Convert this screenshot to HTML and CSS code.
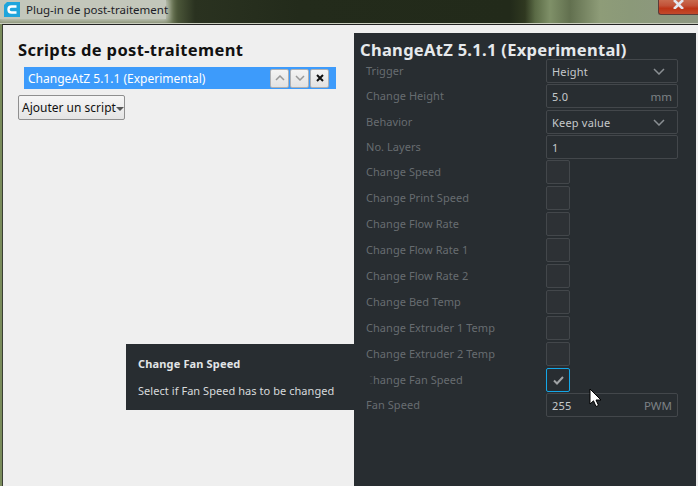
FILE: index.html
```html
<!DOCTYPE html>
<html lang="fr">
<head>
<meta charset="utf-8">
<title>Plug-in de post-traitement</title>
<link rel="stylesheet" href="styles.css">
</head>
<body>
<div class="titlebar">
  <div class="title-glow">
    <svg class="app-icon" width="16" height="15" viewBox="0 0 16 15"><path d="M3 0H16V15H0V3Z" fill="#1fa5dc"/><path d="M12.5 4.5H7.5Q4.5 4.5 4.5 7.5T7.5 10.5H12.5" fill="none" stroke="#fff" stroke-width="2.4"/></svg>
    <span class="title-text">Plug-in de post-traitement</span>
  </div>
  <div class="close-btn"><svg width="11" height="9" viewBox="0 0 11 9"><path d="M1 0L10 9M10 0L1 9" stroke="#e4e6ee" stroke-width="2.6"/></svg></div>
</div>
<div class="window">
  <section class="left">
    <h1 class="scripts-title">Scripts de post-traitement</h1>
    <div class="script-item">
      <span class="script-name">ChangeAtZ 5.1.1 (Experimental)</span>
      <span class="tool-btn"><svg width="10" height="6" viewBox="0 0 10 6"><path d="M1 5L5 1L9 5" fill="none" stroke="#999" stroke-width="1.5"/></svg></span>
      <span class="tool-btn"><svg width="10" height="6" viewBox="0 0 10 6"><path d="M1 1L5 5L9 1" fill="none" stroke="#999" stroke-width="1.5"/></svg></span>
      <span class="tool-btn"><svg width="8" height="8" viewBox="0 0 8 8"><path d="M1 1L7 7M7 1L1 7" stroke="#111" stroke-width="2"/></svg></span>
    </div>
    <div class="add-btn">Ajouter un script<span class="add-arrow"></span></div>
  </section>
  <section class="right">
    <h2 class="panel-title">ChangeAtZ 5.1.1 (Experimental)</h2>
    <div class="row"><span class="label">Trigger</span><div class="field"><span>Height</span><svg class="chev" width="12" height="7" viewBox="0 0 12 7"><path d="M1 1L6 6L11 1" fill="none" stroke="#8a8f93" stroke-width="1.5"/></svg></div></div>
    <div class="row gap2"><span class="label">Change Height</span><div class="field"><span>5.0</span><span class="unit">mm</span></div></div>
    <div class="row"><span class="label">Behavior</span><div class="field"><span>Keep value</span><svg class="chev" width="12" height="7" viewBox="0 0 12 7"><path d="M1 1L6 6L11 1" fill="none" stroke="#8a8f93" stroke-width="1.5"/></svg></div></div>
    <div class="row"><span class="label">No. Layers</span><div class="field"><span>1</span></div></div>
    <div class="row gap2"><span class="label">Change Speed</span><div class="check"></div></div>
    <div class="row gap2"><span class="label">Change Print Speed</span><div class="check"></div></div>
    <div class="row gap2"><span class="label">Change Flow Rate</span><div class="check"></div></div>
    <div class="row gap2"><span class="label">Change Flow Rate 1</span><div class="check"></div></div>
    <div class="row gap2"><span class="label">Change Flow Rate 2</span><div class="check"></div></div>
    <div class="row gap2"><span class="label">Change Bed Temp</span><div class="check"></div></div>
    <div class="row gap2"><span class="label">Change Extruder 1 Temp</span><div class="check"></div></div>
    <div class="row gap2"><span class="label">Change Extruder 2 Temp</span><div class="check"></div></div>
    <div class="row"><span class="label label-cut"><span class="cut-c">C</span>hange Fan Speed</span><div class="check check-on"><svg width="11" height="9" viewBox="0 0 11 9"><path d="M1 4.5L4 7.5L10 1" fill="none" stroke="#a0a3a6" stroke-width="2"/></svg></div></div>
    <div class="row"><span class="label">Fan Speed</span><div class="field"><span>255</span><span class="unit">PWM</span></div></div>
  </section>
  <aside class="tooltip">
    <div class="tip-title">Change Fan Speed</div>
    <div class="tip-body">Select if Fan Speed has to be changed</div>
  </aside>
  <svg class="cursor" width="13" height="20" viewBox="0 0 13 20"><path d="M1 1V16L4.5 12.8L7 18.5L9.5 17.4L7 12H12Z" fill="#fff" stroke="#000" stroke-width="1"/></svg>
</div>
</body>
</html>
```

FILE: styles.css
```css
* { box-sizing: border-box; }
html, body { margin: 0; height: 100%; }
body {
  width: 698px;
  height: 486px;
  overflow: hidden;
  display: flex;
  flex-direction: column;
  font-family: "Noto Sans", sans-serif;
  background: #7a8c5c;
}
.titlebar {
  height: 24px;
  flex: none;
  overflow: hidden;
  display: flex;
  align-items: flex-start;
  justify-content: space-between;
  border-bottom: 1px solid #c9cdbe;
  background: linear-gradient(90deg, #75815c 0, #6f7b58 170px, #4a5538 178px, #2a3220 195px, #232b1b 300px, #222a1a 510px, #2f3820 525px, #5a6a45 535px, #7f9068 550px, #62704f 570px, #8e9c78 600px, #8b9979 630px, #8d9681 698px);
}
.title-glow {
  flex: none;
  width: 166px;
  height: 19px;
  display: flex;
  align-items: flex-start;
  padding: 2px 0 0 4px;
  gap: 6px;
  background: #c3c7bb;
  box-shadow: 0 0 6px 3px #c3c7bb;
}
.app-icon { flex: none; }
.title-text { font-size: 11.5px; line-height: 15px; color: #1c1c26; white-space: nowrap; }
.close-btn {
  flex: none;
  width: 40px;
  height: 15px;
  background: linear-gradient(#c96a4e 0, #c25238 40%, #bd3517 60%, #c24a2c 100%);
  border: 1px solid #5c3a38;
  border-top: 0;
  border-right: 0;
  border-radius: 0 0 0 3px;
  display: flex;
  justify-content: center;
  align-items: flex-start;
}
.window {
  position: relative;
  flex: 1;
  display: flex;
  margin-left: 2px;
  border-left: 1px solid #3a3f35;
  border-top: 1px solid #222;
  background: #efefef;
  padding-right: 2px;
}
.left { width: 351px; flex: none; padding: 15px 0 0 15px; }
.scripts-title {
  margin: 0 0 7px;
  font-size: 16.5px;
  line-height: 20px;
  font-weight: 700;
  color: #111;
  letter-spacing: 0.36px;
  white-space: nowrap;
}
.script-item {
  margin-left: 6px;
  width: 312px;
  height: 22px;
  background: #3d9bfb;
  display: flex;
  align-items: center;
  gap: 1px;
  padding: 0 7px 0 4px;
  margin-bottom: 6px;
}
.script-name { flex: 1; font-size: 12px; color: #fff; white-space: nowrap; }
.tool-btn {
  width: 19px;
  height: 19px;
  background: linear-gradient(#f4f4f4, #e2e2e2);
  border: 1px solid #aeb0b3;
  border-radius: 2px;
  display: flex;
  align-items: center;
  justify-content: center;
}
.add-btn {
  width: 107px;
  height: 25px;
  background: linear-gradient(#f6f6f6, #e4e4e4);
  border: 1px solid #8f8f8f;
  border-radius: 2px;
  display: flex;
  align-items: center;
  padding-left: 3px;
  font-size: 12px;
  color: #111;
  white-space: nowrap;
}
.add-arrow {
  width: 0; height: 0;
  margin-top: 2px;
  border: 4px solid transparent;
  border-top: 4px solid #555;
  border-bottom: 0;
}
.right {
  width: 342px;
  flex: none;
  margin-top: 8px;
  background: #282d31;
  padding: 7px 0 0 6px;
}
.panel-title {
  margin: 0;
  height: 19px;
  font-size: 16.5px;
  line-height: 19px;
  font-weight: 700;
  color: #e6e9ec;
  letter-spacing: 0.3px;
  white-space: nowrap;
}
.row { height: 24px; margin-bottom: 1px; display: flex; align-items: center; padding-left: 6px; }
.gap2 { margin-bottom: 2px; }
.label { width: 180px; flex: none; margin-bottom: 2px; font-size: 11px; letter-spacing: 0.05px; color: #676c70; white-space: nowrap; }
.cut-c { color: #3c4145; clip-path: inset(0 0 0 55%); display: inline-block; }
.field {
  width: 132px;
  height: 24px;
  border: 1px solid #43474b;
  border-radius: 2px;
  display: flex;
  align-items: center;
  justify-content: space-between;
  padding: 0 5px;
  font-size: 11px;
  letter-spacing: 0.2px;
  color: #c6c9cc;
}
.unit { color: #7c8185; font-size: 11.5px; letter-spacing: 0; }
.chev { margin-right: 7px; }
.check {
  width: 24px;
  height: 24px;
  border: 1px solid #43474b;
  border-radius: 2px;
  background: #2d3135;
  display: flex;
  align-items: center;
  justify-content: center;
}
.check-on { border-color: #14a7e8; background: #282d31; }
.tooltip {
  position: absolute;
  left: 123px;
  top: 319px;
  width: 228px;
  height: 66px;
  background: #282d31;
  padding: 12px 12px;
  color: #d7dadc;
}
.tip-title { font-size: 11px; letter-spacing: 0.15px; font-weight: 700; line-height: 16px; color: #e2e5e7; margin-bottom: 11px; }
.tip-body { font-size: 11px; letter-spacing: 0.05px; line-height: 16px; white-space: nowrap; }
.cursor { position: absolute; left: 586px; top: 363px; }
```
